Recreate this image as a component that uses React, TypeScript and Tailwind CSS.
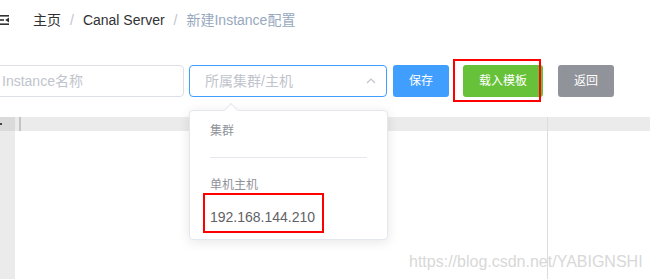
import React from "react";

const font = { fontFamily: '"Liberation Sans", "Noto Sans CJK SC", sans-serif' };

const FoldIcon: React.FC = () => (
  <svg width="9" height="10" viewBox="0 0 9 10" className="shrink-0">
    <rect x="0" y="0" width="9" height="1.6" fill="#303133" />
    <rect x="0" y="8.4" width="9" height="1.6" fill="#303133" />
    <rect x="0" y="4.2" width="4" height="1.6" fill="#303133" />
    <polygon points="9,2.4 5.2,5 9,7.6" fill="#303133" />
  </svg>
);

const Breadcrumb: React.FC = () => (
  <div className="flex items-center h-10 text-[14px]">
    <FoldIcon />
    <span className="ml-[24px] text-[#303133]">主页</span>
    <span className="mx-[9px] text-[#c0c4cc]">/</span>
    <span className="text-[#303133]">Canal Server</span>
    <span className="mx-[9px] text-[#c0c4cc]">/</span>
    <span className="text-[#97a8be]">新建Instance配置</span>
  </div>
);

const Toolbar: React.FC = () => (
  <div className="relative flex items-center h-8 mt-[25px]">
    <div className="ml-[-13px] w-[197px] h-8 border border-[#dcdfe6] rounded-[4px] flex items-center px-[14px] text-[14px] text-[#c0c4cc] shrink-0">
      Instance名称
    </div>
    <div className="ml-[5px] w-[198px] h-8 border border-[#409eff] rounded-[4px] flex items-center justify-between pl-[15px] pr-[9px] text-[14px] text-[#c0c4cc] shrink-0">
      <span>所属集群/主机</span>
      <svg width="12" height="12" viewBox="0 0 12 12">
        <polyline points="2,8 6,4 10,8" fill="none" stroke="#c0c4cc" strokeWidth="1.2" />
      </svg>
    </div>
    <button className="ml-[6px] w-[56px] h-8 rounded-[3px] bg-[#409eff] text-white text-[12px] shrink-0">保存</button>
    <button className="ml-[14px] w-[80px] h-8 rounded-[3px] bg-[#67c23a] text-white text-[12px] shrink-0">载入模板</button>
    <button className="ml-[15px] w-[56px] h-8 rounded-[3px] bg-[#909399] text-white text-[12px] shrink-0">返回</button>
    <div className="absolute left-[453px] top-[-6px] w-[88px] h-[43px] border-2 border-[#ff0000]" />
  </div>
);

const Editor: React.FC = () => (
  <div className="flex mt-5 h-[170px]">
    <div className="w-[15px] bg-[#ebebeb] shrink-0">
      <div className="h-[14px] bg-[#dadada] flex items-center">
        <div className="w-[2px] h-[2px] bg-[#444]" />
      </div>
    </div>
    <div className="flex-1 flex flex-col">
      <div className="h-[14px] bg-[#ebebeb] flex">
        <div className="ml-[4px] w-[2px] h-full bg-[#c4c4c4]" />
      </div>
      <div className="flex-1" />
    </div>
  </div>
);

const Dropdown: React.FC = () => (
  <div className="absolute left-[189px] top-[110px] w-[199px] bg-white border border-[#e4e7ed] rounded-[4px] shadow-[0_2px_12px_0_rgba(0,0,0,0.1)] py-[5px]">
    <div className="absolute -top-[6px] left-[36px] w-[10px] h-[10px] bg-white border-l border-t border-[#e4e7ed] rotate-45" />
    <div className="relative pb-[24px]">
      <div className="pl-5 h-[30px] leading-[30px] text-[12px] text-[#909399]">集群</div>
      <div className="absolute left-5 right-5 bottom-[12px] h-px bg-[#e4e7ed]" />
    </div>
    <div className="pl-5 h-[30px] leading-[30px] text-[12px] text-[#909399]">单机主机</div>
    <div className="relative pl-5 h-[34px] leading-[34px] text-[14px] text-[#606266]">
      192.168.144.210
      <div className="absolute left-[13px] top-[-7px] w-[121px] h-[40px] border-2 border-[#ff0000]" />
    </div>
  </div>
);

export default function App() {
  return (
    <div className="relative w-[650px] h-[279px] overflow-hidden bg-white" style={font}>
      <Breadcrumb />
      <Toolbar />
      <div className="relative">
        <Editor />
        <div className="absolute left-[547px] top-0 bottom-0 w-px bg-[#dcdcdc]" />
      </div>
      <Dropdown />
      <div className="absolute left-[409px] top-[252px] text-[16px] text-[#d8d8d8] leading-5">
        https://blog.csdn.net/YABIGNSHI
      </div>
    </div>
  );
}
